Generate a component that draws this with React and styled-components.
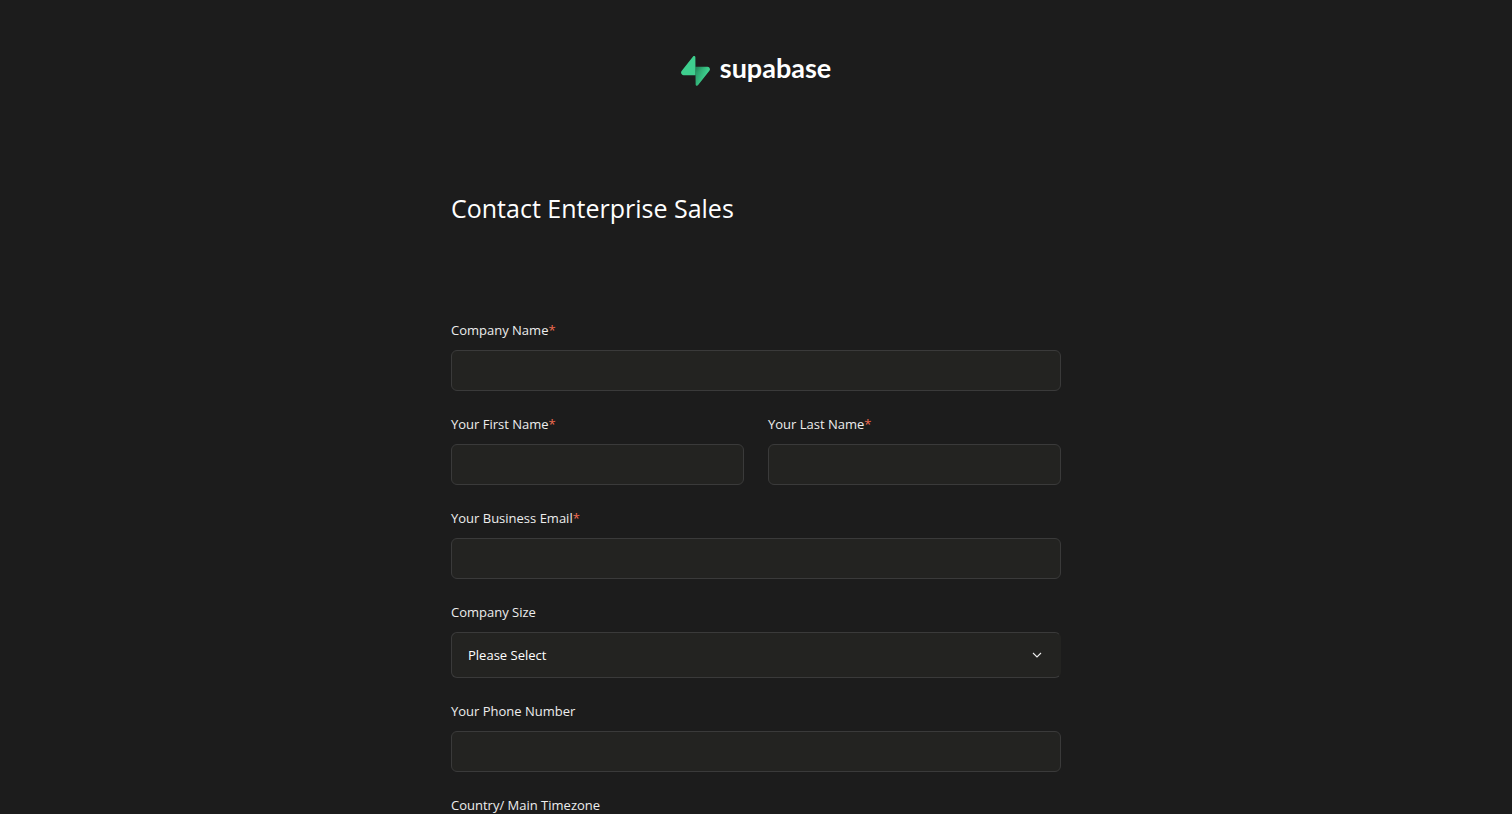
import styled, { createGlobalStyle } from 'styled-components';

const GlobalStyle = createGlobalStyle`
	*,
	*::before,
	*::after {
		box-sizing: border-box;
	}

	html {
		background: #1c1c1c;
		scrollbar-width: none;
	}

	body {
		margin: 0;
		color: #ededed;
		font-family: 'Open Sans', 'Noto Sans', sans-serif;
		font-size: 13px;
		line-height: 20px;
	}
`;

const Page = styled.div`
	display: flex;
	flex-direction: column;
	align-items: center;
	padding: 54px 24px 64px;
`;

const Logo = styled.a`
	display: flex;
	align-items: flex-start;
	gap: 10px;
	height: 32px;
	color: #fff;
	font-family: Lato, sans-serif;
	font-size: 27px;
	font-weight: 700;
	line-height: 28px;
	text-decoration: none;

	svg {
		width: 29px;
		height: 30px;
		margin-top: 2px;
	}
`;

const Main = styled.main`
	width: 100%;
	max-width: 610px;
	margin-top: 102px;

	h1 {
		margin: 0;
		color: #fff;
		font-size: 25px;
		font-weight: 400;
		line-height: 40px;
	}
`;

const Form = styled.form`
	display: flex;
	flex-direction: column;
	gap: 23px;
	margin-top: 92px;
`;

const Row = styled.div`
	display: grid;
	grid-template-columns: 1fr 1fr;
	gap: 24px;
`;

const FieldWrapper = styled.div`
	display: flex;
	flex-direction: column;
	gap: 10px;

	.required {
		color: #f26b50;
	}
`;

const Input = styled.input`
	width: 100%;
	height: 41px;
	padding: 0 16px;
	color: #fff;
	font: inherit;
	background: #232321;
	border: 1px solid #3a3a3a;
	border-radius: 6px;

	&:focus {
		border-color: #3ecf8e;
		outline: none;
	}
`;

const SelectWrapper = styled.div`
	display: grid;
	align-items: center;

	select,
	svg {
		grid-area: 1 / 1;
	}

	select {
		width: 100%;
		height: 46px;
		padding: 0 40px 0 16px;
		color: #fff;
		font: inherit;
		background: #232321;
		border: 1px solid #3a3a3a;
		border-right-color: transparent;
		border-radius: 6px;
		appearance: none;
	}

	svg {
		justify-self: end;
		width: 10px;
		height: 6px;
		margin-right: 19px;
		pointer-events: none;
	}
`;

function LogoMark() {
	return (
		<svg viewBox='0 0 109 113' fill='none' aria-hidden='true'>
			<defs>
				<linearGradient id='bolt' x1='53.97' y1='54.97' x2='94.16' y2='71.83' gradientUnits='userSpaceOnUse'>
					<stop stopColor='#249361' />
					<stop offset='1' stopColor='#3ecf8e' />
				</linearGradient>
				<linearGradient id='shade' x1='36.16' y1='30.58' x2='54.48' y2='65.08' gradientUnits='userSpaceOnUse'>
					<stop />
					<stop offset='1' stopOpacity='0' />
				</linearGradient>
			</defs>
			<path
				fill='url(#bolt)'
				d='M63.708 110.284c-2.86 3.601-8.658 1.628-8.727-2.97l-1.007-67.251h45.22c8.19 0 12.758 9.46 7.665 15.874l-43.151 54.347Z'
			/>
			<path
				fill='url(#shade)'
				fillOpacity='0.2'
				d='M63.708 110.284c-2.86 3.601-8.658 1.628-8.727-2.97l-1.007-67.251h45.22c8.19 0 12.758 9.46 7.665 15.874l-43.151 54.347Z'
			/>
			<path
				fill='#3ecf8e'
				d='M45.317 2.071c2.86-3.601 8.657-1.628 8.726 2.97l.442 67.251H9.83c-8.19 0-12.759-9.46-7.665-15.875L45.317 2.072Z'
			/>
		</svg>
	);
}

function Field({ label, name, required, children, ...props }) {
	return (
		<FieldWrapper>
			<label htmlFor={name}>
				{label}
				{required && <span className='required'>*</span>}
			</label>
			{children || <Input id={name} name={name} required={required} {...props} />}
		</FieldWrapper>
	);
}

function Select({ name, options = [] }) {
	return (
		<SelectWrapper>
			<select id={name} name={name} defaultValue=''>
				<option value=''>Please Select</option>
				{options.map((option) => (
					<option key={option}>{option}</option>
				))}
			</select>
			<svg viewBox='0 0 10 6' fill='none' aria-hidden='true'>
				<path d='M1 1l4 4 4-4' stroke='#ededed' strokeWidth='1.1' />
			</svg>
		</SelectWrapper>
	);
}

function App() {
	return (
		<>
			<GlobalStyle />
			<Page>
				<Logo href='/'>
					<LogoMark />
					supabase
				</Logo>
				<Main>
					<h1>Contact Enterprise Sales</h1>
					<Form action='/' method='post'>
						<Field label='Company Name' name='company' type='text' required />
						<Row>
							<Field label='Your First Name' name='firstName' type='text' required />
							<Field label='Your Last Name' name='lastName' type='text' required />
						</Row>
						<Field label='Your Business Email' name='email' type='email' required />
						<Field label='Company Size' name='size'>
							<Select name='size' />
						</Field>
						<Field label='Your Phone Number' name='phone' type='tel' />
						<Field label='Country/ Main Timezone' name='timezone' type='text' />
					</Form>
				</Main>
			</Page>
		</>
	);
}

export default App;
